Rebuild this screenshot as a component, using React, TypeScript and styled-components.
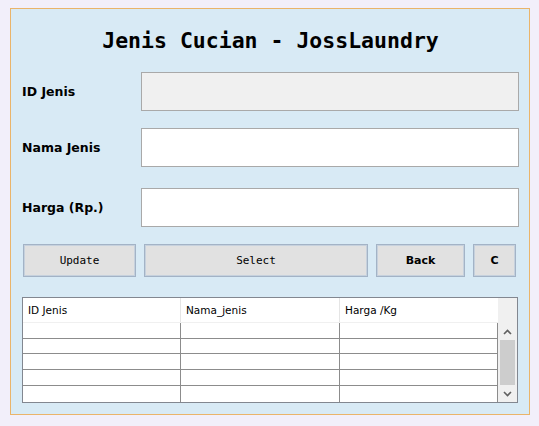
import styled, { createGlobalStyle } from 'styled-components';

const GlobalStyle = createGlobalStyle`
  html, body {
    margin: 0;
    padding: 0;
    background: #f2effa;
  }
  #root {
    padding: 8px 10px 0 10px;
  }
`;

const Panel = styled.div`
  box-sizing: border-box;
  width: 520px;
  height: 407px;
  background: #d8eaf5;
  border: 1px solid #eab46a;
  padding: 0 10px 0 11px;
  display: flex;
  flex-direction: column;
`;

const Title = styled.h1`
  margin: 17px 0 0 0;
  height: 30px;
  line-height: 30px;
  text-align: center;
  font-family: "DejaVu Sans Mono", "Liberation Mono", monospace;
  font-weight: bold;
  font-size: 21.5px;
  color: #000;
`;

const FieldRow = styled.div<{ $top: number }>`
  display: grid;
  grid-template-columns: 119px 1fr;
  align-items: center;
  margin-top: ${(p) => p.$top}px;
  height: 39px;
`;

const Label = styled.label`
  font-family: "DejaVu Sans", "Liberation Sans", sans-serif;
  font-weight: bold;
  font-size: 12.5px;
  color: #000;
`;

const Field = styled.input<{ $disabled?: boolean }>`
  box-sizing: border-box;
  height: 39px;
  width: 378px;
  border: 1px solid #a9a9a9;
  background: ${(p) => (p.$disabled ? '#f0f0f0' : '#ffffff')};
  outline: none;
  padding: 0 4px;
`;

const ButtonRow = styled.div`
  display: flex;
  gap: 8px;
  margin-top: 17px;
  padding-left: 1px;
  height: 33px;
`;

const Button = styled.button<{ $w: number; $mono?: boolean }>`
  box-sizing: border-box;
  width: ${(p) => p.$w}px;
  height: 33px;
  background: #e1e1e1;
  border: 1px solid #a3b3c6;
  box-shadow: inset 0 0 0 1px #c6d1dd;
  font-family: ${(p) =>
    p.$mono ? '"DejaVu Sans Mono", "Liberation Mono", monospace' : '"DejaVu Sans", "Liberation Sans", sans-serif'};
  font-weight: ${(p) => (p.$mono ? 'normal' : 'bold')};
  font-size: 11px;
  color: #000;
  padding: 0;
`;

const TableBox = styled.div`
  box-sizing: border-box;
  margin-top: 20px;
  width: 496px;
  height: 106px;
  border: 1px solid #828790;
  background: #ffffff;
  display: flex;
`;

const Grid = styled.div`
  flex: 1;
  display: flex;
  flex-direction: column;
`;

const HeaderRow = styled.div`
  display: grid;
  grid-template-columns: 158px 159px 1fr;
  height: 24px;
  border-bottom: 1px solid #f0f0f0;
`;

const HeaderCell = styled.div`
  font-family: "DejaVu Sans", "Liberation Sans", sans-serif;
  font-size: 10.5px;
  color: #000;
  padding-left: 5px;
  display: flex;
  align-items: center;
  border-right: 1px solid #e5e5e5;
  &:last-child {
    border-right: none;
  }
`;

const BodyRow = styled.div`
  display: grid;
  grid-template-columns: 158px 159px 1fr;
  height: 16px;
  border-bottom: 1px solid #8c8c8c;
  box-sizing: border-box;
  &:last-child {
    border-bottom: none;
  }
`;

const BodyCell = styled.div`
  border-right: 1px solid #8c8c8c;
`;

const ScrollBar = styled.div`
  width: 19px;
  background: #f0f0f0;
  display: flex;
  flex-direction: column;
  padding-top: 25px;
  box-sizing: border-box;
`;

const Arrow = styled.div`
  height: 17px;
  display: flex;
  align-items: center;
  justify-content: center;
`;

const Thumb = styled.div`
  flex: 1;
  margin: 0 2px;
  background: #cdcdcd;
`;

const Chevron = ({ up }: { up?: boolean }) => (
  <svg width="9" height="6" viewBox="0 0 9 6">
    <path
      d={up ? 'M1 5 L4.5 1.5 L8 5' : 'M1 1 L4.5 4.5 L8 1'}
      fill="none"
      stroke="#606060"
      strokeWidth="1.6"
    />
  </svg>
);

export default function App() {
  const rows = [0, 1, 2, 3, 4];
  return (
    <>
      <GlobalStyle />
      <Panel>
        <Title>Jenis Cucian - JossLaundry</Title>
        <FieldRow $top={16}>
          <Label>ID Jenis</Label>
          <Field $disabled readOnly />
        </FieldRow>
        <FieldRow $top={17}>
          <Label>Nama Jenis</Label>
          <Field />
        </FieldRow>
        <FieldRow $top={21}>
          <Label>Harga (Rp.)</Label>
          <Field />
        </FieldRow>
        <ButtonRow>
          <Button $w={113} $mono>Update</Button>
          <Button $w={224} $mono>Select</Button>
          <Button $w={89}>Back</Button>
          <Button $w={43}>C</Button>
        </ButtonRow>
        <TableBox>
          <Grid>
            <HeaderRow>
              <HeaderCell>ID Jenis</HeaderCell>
              <HeaderCell>Nama_jenis</HeaderCell>
              <HeaderCell>Harga /Kg</HeaderCell>
            </HeaderRow>
            {rows.map((r) => (
              <BodyRow key={r}>
                <BodyCell />
                <BodyCell />
                <BodyCell />
              </BodyRow>
            ))}
          </Grid>
          <ScrollBar>
            <Arrow>
              <Chevron up />
            </Arrow>
            <Thumb />
            <Arrow>
              <Chevron />
            </Arrow>
          </ScrollBar>
        </TableBox>
      </Panel>
    </>
  );
}
